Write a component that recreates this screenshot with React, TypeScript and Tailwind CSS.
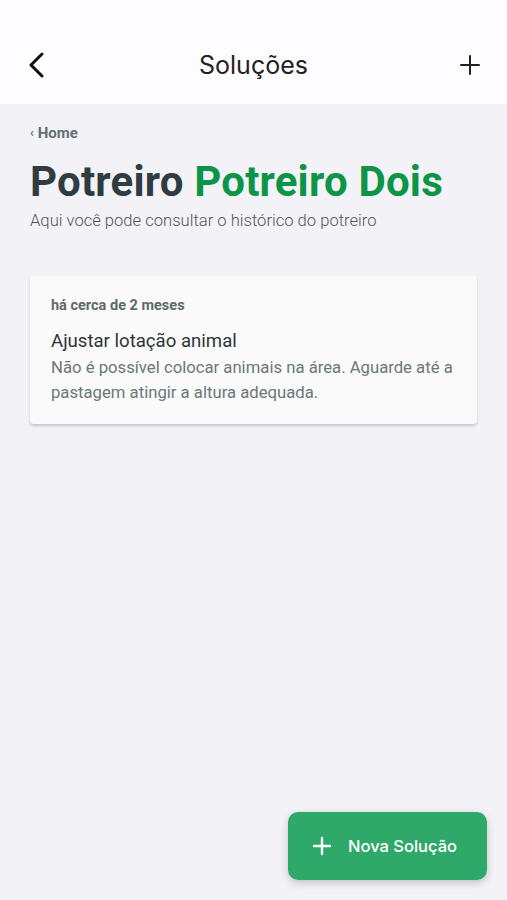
import React from 'react';

const App = () => {
  return (
    <div className="relative flex h-[900px] w-[507px] flex-col overflow-hidden bg-[#f3f2f7]" style={{ fontFamily: 'Roboto, sans-serif' }}>
      <header className="flex h-[104px] items-end bg-[#fdfcff] px-[26px] pb-[24px]" style={{ fontFamily: 'Inter, sans-serif' }}>
        <svg width="22" height="26" viewBox="0 0 22 26" className="mb-[2px] text-[#111]">
          <path d="M16 2 L5 13 L16 24" fill="none" stroke="currentColor" strokeWidth="3" strokeLinecap="round" strokeLinejoin="round" />
        </svg>
        <h1 className="flex-1 text-center text-[25px] leading-[30px] text-[#222]">Soluções</h1>
        <svg width="22" height="22" viewBox="0 0 22 22" className="mb-[4px] text-[#222]">
          <path d="M11 2 V20 M2 11 H20" fill="none" stroke="currentColor" strokeWidth="2" strokeLinecap="round" />
        </svg>
      </header>

      <main className="flex flex-col px-[30px] pt-[20px]">
        <div className="flex items-center gap-[4px] text-[15px] font-bold leading-[18px] text-[#646e72]">
          <span className="text-[12px]">‹</span>
          <span>Home</span>
        </div>
        <h2 className="mt-[15px] text-[42px] font-bold leading-[50px] tracking-[0.2px] text-[#2f3c42]">
          Potreiro <span className="text-[#0c9447]">Potreiro Dois</span>
        </h2>
        <p className="mt-[3px] text-[16.6px] font-light leading-[22px] text-[#555]">Aqui você pode consultar o histórico do potreiro</p>

        <div className="mt-[44px] flex flex-col rounded-[4px] bg-[#fafafa] px-[21px] pb-[19px] pt-[21px] shadow-[0_2px_3px_rgba(0,0,0,0.18)]">
          <span className="text-[14.5px] font-bold leading-[18px] text-[#5c6a6a]">há cerca de 2 meses</span>
          <span className="mt-[14px] text-[18.6px] leading-[24px] text-[#2f3436]">Ajustar lotação animal</span>
          <p className="mt-[2px] text-[16.7px] leading-[25px] text-[#6a7878]">
            Não é possível colocar animais na área. Aguarde até a pastagem atingir a altura adequada.
          </p>
        </div>
      </main>

      <button className="absolute bottom-[20px] right-[20px] flex h-[68px] w-[199px] items-center gap-[16px] rounded-[10px] bg-[#2fa96a] pl-[24px] text-white shadow-[0_3px_8px_rgba(0,0,0,0.2)]" style={{ fontFamily: 'Inter, sans-serif' }}>
        <svg width="20" height="20" viewBox="0 0 20 20">
          <path d="M10 2 V18 M2 10 H18" fill="none" stroke="currentColor" strokeWidth="2.4" strokeLinecap="round" />
        </svg>
        <span className="text-[16.5px] font-medium">Nova Solução</span>
      </button>
    </div>
  );
};

export default App;
